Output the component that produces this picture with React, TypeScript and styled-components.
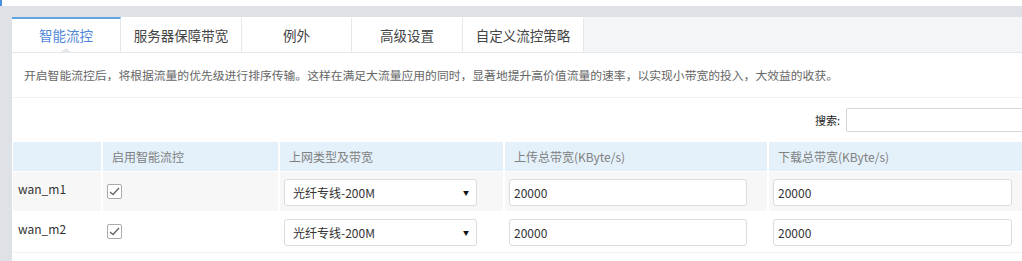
import React from "react";
import styled, { createGlobalStyle } from "styled-components";

const GlobalStyle = createGlobalStyle`
  body {
    margin: 0;
    background: #fff;
    font-family: "Noto Sans CJK SC", "Noto Sans", sans-serif;
    overflow: hidden;
  }
`;

const TopStrip = styled.div`
  height: 6px;
  background: #fff;
  border-left: 2px solid #4a90e2;
`;

const Shell = styled.div`
  background: #dee1e5;
  padding: 11px 0 0 12px;
  height: 255px;
  box-sizing: border-box;
`;

const Panel = styled.div`
  background: #fff;
  width: 1060px;
  height: 100%;
`;

const TabBar = styled.div`
  display: flex;
  height: 35px;
  background: #f4f5f7;
  border-bottom: 1px solid #e4e7eb;
`;

const Tab = styled.div<{ $w: number; $active?: boolean }>`
  position: relative;
  width: ${(p) => p.$w}px;
  box-sizing: border-box;
  display: flex;
  align-items: center;
  justify-content: center;
  background: #fff;
  border-right: 1px solid #e6e8eb;
  border-top: 2px solid ${(p) => (p.$active ? "#5fa3e6" : "#fff")};
  font-size: 13.5px;
  color: ${(p) => (p.$active ? "#4f87d8" : "#444")};
  padding-bottom: 2px;

  &::after {
    content: "";
    display: ${(p) => (p.$active ? "block" : "none")};
    position: absolute;
    left: 50%;
    bottom: -1px;
    margin-left: -6px;
    border: 6px solid transparent;
    border-bottom: 5px solid #e4e7eb;
    border-top: 0;
  }
`;

const Desc = styled.div`
  height: 44px;
  line-height: 44px;
  padding-left: 12px;
  font-size: 11.8px;
  color: #666;
  border-bottom: 1px solid #f0f1f2;
`;

const SearchRow = styled.div`
  display: flex;
  align-items: center;
  padding: 10px 0 10px 803px;
  gap: 6px;
`;

const SearchLabel = styled.span`
  font-size: 11px;
  color: #222;
`;

const SearchInput = styled.input`
  width: 220px;
  height: 24px;
  box-sizing: border-box;
  border: 1px solid #d6d6d6;
  border-radius: 2px;
  outline: none;
`;

const Grid = styled.div`
  display: grid;
  grid-template-columns: 88px 175px 223px 262px 262px;
  column-gap: 2px;
  row-gap: 1px;
  margin-left: 1px;
  padding-bottom: 1px;
  border-bottom: 1px solid #eef0f2;
  width: 1020px;
`;

const HeadCell = styled.div`
  height: 29px;
  line-height: 29px;
  padding-left: 9px;
  background: #e4f1fb;
  font-size: 12px;
  color: #808080;
`;

const Cell = styled.div<{ $odd?: boolean }>`
  height: 39px;
  box-sizing: border-box;
  padding: 7px 4px 0;
  background: ${(p) => (p.$odd ? "#f7f7f7" : "#fff")};
  font-size: 12px;
  color: #333;
`;

const Name = styled.div`
  line-height: 20px;
  padding-left: 1px;
`;

const Check = styled.div`
  width: 15px;
  height: 15px;
  box-sizing: border-box;
  margin-top: 5px;
  border: 1px solid #aaa;
  border-radius: 2px;
  background: #fff;
  display: flex;
  align-items: center;
  justify-content: center;
`;

const SelectBox = styled.div`
  width: 193px;
  height: 27px;
  box-sizing: border-box;
  border: 1px solid #dcdcdc;
  border-radius: 3px;
  background: #fff;
  display: flex;
  align-items: center;
  justify-content: space-between;
  padding: 0 7px 0 8px;
  font-size: 12px;
  color: #333;
`;

const Arrow = styled.span`
  font-size: 6px;
  color: #111;
`;

const TextInput = styled.input<{ $w: number }>`
  width: ${(p) => p.$w}px;
  height: 27px;
  box-sizing: border-box;
  border: 1px solid #dcdcdc;
  border-radius: 3px;
  padding: 0 4px;
  font-family: inherit;
  font-size: 12px;
  color: #333;
  outline: none;
`;

const tabs = [
  { label: "智能流控", w: 109, active: true },
  { label: "服务器保障带宽", w: 121 },
  { label: "例外", w: 110 },
  { label: "高级设置", w: 111 },
  { label: "自定义流控策略", w: 121 },
];

const heads = ["", "启用智能流控", "上网类型及带宽", "上传总带宽(KByte/s)", "下载总带宽(KByte/s)"];

const rows = [
  { name: "wan_m1", type: "光纤专线-200M", up: "20000", down: "20000" },
  { name: "wan_m2", type: "光纤专线-200M", up: "20000", down: "20000" },
];

const CheckMark = () => (
  <svg width="11" height="9" viewBox="0 0 11 9">
    <path d="M1 5 L4 7.5 L10 1" fill="none" stroke="#666" strokeWidth="1.3" />
  </svg>
);

export default function App() {
  return (
    <>
      <GlobalStyle />
      <TopStrip />
      <Shell>
        <Panel>
          <TabBar>
            {tabs.map((t) => (
              <Tab key={t.label} $w={t.w} $active={t.active}>
                {t.label}
              </Tab>
            ))}
          </TabBar>
          <Desc>
            开启智能流控后，将根据流量的优先级进行排序传输。这样在满足大流量应用的同时，显著地提升高价值流量的速率，以实现小带宽的投入，大效益的收获。
          </Desc>
          <SearchRow>
            <SearchLabel>搜索:</SearchLabel>
            <SearchInput />
          </SearchRow>
          <Grid>
            {heads.map((h, i) => (
              <HeadCell key={i}>{h}</HeadCell>
            ))}
            {rows.map((r, i) => {
              const odd = i % 2 === 0;
              return (
                <React.Fragment key={r.name}>
                  <Cell $odd={odd}>
                    <Name>{r.name}</Name>
                  </Cell>
                  <Cell $odd={odd}>
                    <Check>
                      <CheckMark />
                    </Check>
                  </Cell>
                  <Cell $odd={odd}>
                    <SelectBox>
                      <span>{r.type}</span>
                      <Arrow>▼</Arrow>
                    </SelectBox>
                  </Cell>
                  <Cell $odd={odd}>
                    <TextInput $w={238} value={r.up} readOnly />
                  </Cell>
                  <Cell $odd={odd}>
                    <TextInput $w={239} value={r.down} readOnly />
                  </Cell>
                </React.Fragment>
              );
            })}
          </Grid>
        </Panel>
      </Shell>
    </>
  );
}
